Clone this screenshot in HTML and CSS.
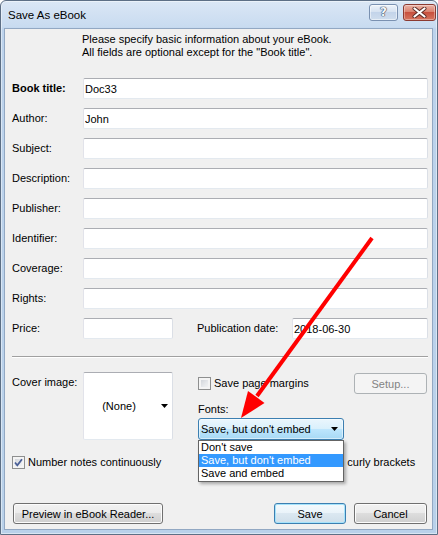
FILE: index.html
```html
<!DOCTYPE html>
<html>
<head>
<meta charset="utf-8">
<title>Save As eBook</title>
<link rel="stylesheet" href="styles.css">
</head>
<body>
<div class="window">
  <div class="titlebar">
    <span class="title">Save As eBook</span>
    <div class="caption">
      <span class="cap-btn help">?</span>
      <span class="cap-btn close">
        <svg width="15" height="11" viewBox="0 0 15 11"><path d="M2.5 1.5 L12.5 9.5 M12.5 1.5 L2.5 9.5" stroke="#5b2a24" stroke-width="4" stroke-linecap="round"/><path d="M2.5 1.5 L12.5 9.5 M12.5 1.5 L2.5 9.5" stroke="#ffffff" stroke-width="2.2" stroke-linecap="round"/></svg>
      </span>
    </div>
  </div>
  <div class="client">
    <div class="intro">
      <div>Please specify basic information about your eBook.</div>
      <div>All fields are optional except for the "Book title".</div>
    </div>
    <div class="fields">
      <label class="lbl bold">Book title:</label><input class="tb" value="Doc33">
      <label class="lbl">Author:</label><input class="tb" value="John">
      <label class="lbl">Subject:</label><input class="tb" value="">
      <label class="lbl">Description:</label><input class="tb" value="">
      <label class="lbl">Publisher:</label><input class="tb" value="">
      <label class="lbl">Identifier:</label><input class="tb" value="">
      <label class="lbl">Coverage:</label><input class="tb" value="">
      <label class="lbl">Rights:</label><input class="tb" value="">
      <label class="lbl">Price:</label>
      <div class="price-row">
        <input class="tb price" value="">
        <label class="lbl date-lbl">Publication date:</label>
        <input class="tb date" value="2018-06-30">
      </div>
    </div>
    <div class="sep"></div>
    <div class="cover-section">
      <div class="cover-left">
        <span class="cover-lbl">Cover image:</span>
        <div class="cover-box">
          <span class="none">(None)</span>
          <svg class="tri" width="7" height="4" viewBox="0 0 7 4"><polygon points="0,0 7,0 3.5,4" fill="#000"/></svg>
        </div>
      </div>
      <div class="cover-right">
        <div class="margins-row">
          <span class="chk-line"><span class="chk"></span>Save page margins</span>
          <span class="btn disabled setup">Setup...</span>
        </div>
        <div class="fonts-lbl">Fonts:</div>
        <div class="combo-wrap">
          <div class="combo">
            <span>Save, but don't embed</span>
            <svg class="tri" width="7" height="4" viewBox="0 0 7 4"><polygon points="0,0 7,0 3.5,4" fill="#000"/></svg>
          </div>
          <ul class="droplist">
            <li>Don't save</li>
            <li class="sel">Save, but don't embed</li>
            <li>Save and embed</li>
          </ul>
        </div>
      </div>
    </div>
    <div class="notes-row">
      <div class="notes-left">
        <span class="chk-line"><span class="chk checked"><svg width="11" height="11" viewBox="0 0 11 11"><path d="M2 5.5 L4.3 8.3 L9 2.2" fill="none" stroke="#4a5f97" stroke-width="1.8"/></svg></span>Number notes continuously</span>
      </div>
      <div class="notes-right">
        <span class="chk-line"><span class="chk"></span>Enclose note references in curly brackets</span>
      </div>
    </div>
    <div class="buttons">
      <span class="btn preview">Preview in eBook Reader...</span>
      <span class="btn default save">Save</span>
      <span class="btn cancel">Cancel</span>
    </div>
  </div>
  <svg class="arrow" width="438" height="535" viewBox="0 0 438 535">
    <line x1="372" y1="238" x2="257" y2="396" stroke="#ff0000" stroke-width="4"/>
    <polygon points="241,418 264.5,403 248,391" fill="#ff0000"/>
  </svg>
</div>
</body>
</html>
```

FILE: styles.css
```css
* { box-sizing: border-box; }
html, body { margin: 0; padding: 0; }
body {
  font-family: "Liberation Sans", Arial, sans-serif;
  font-size: 11px;
  color: #000;
  background: #ffffff;
}
.window {
  position: relative;
  width: 438px;
  height: 535px;
  border: 1px solid #5d6f85;
  border-radius: 6px 6px 0 0;
  padding: 0 4px 4px 3px;
  background: linear-gradient(to bottom, #dbe7f5 0, #c8dbf0 26px, #bdd3ec 28px, #b9d1ea 100%);
  box-shadow: inset 0 0 0 1px rgba(255,255,255,0.45);
  display: flex;
  flex-direction: column;
}
.titlebar {
  height: 27px;
  flex: none;
  display: flex;
  align-items: flex-start;
}
.title {
  padding-left: 4px;
  margin-top: 7px;
  font-size: 11.5px;
  line-height: 14px;
  color: #000;
}
.caption {
  margin-left: auto;
  margin-right: -3px;
  margin-top: 3px;
  display: flex;
  gap: 5px;
}
.cap-btn {
  height: 17px;
  border-radius: 3px;
  display: flex;
  align-items: center;
  justify-content: center;
}
.help {
  width: 29px;
  border: 1px solid #7a91b1;
  background: linear-gradient(#eef3fa 0, #d6e2f1 45%, #c3d4ea 50%, #cfdded 100%);
  box-shadow: inset 0 0 0 1px rgba(255,255,255,0.5);
  font-family: "DejaVu Sans", sans-serif;
  font-weight: bold;
  font-size: 12px;
  line-height: 15px;
  color: #f6f8fb;
  text-shadow: 0 0 1px #2d3e58, 0 0 1px #2d3e58, 0 0 1px #2d3e58;
}
.close {
  width: 33px;
  border: 1px solid #8b3a31;
  background: linear-gradient(#ebb3a7 0, #da826f 45%, #c8503e 50%, #d6755f 100%);
  box-shadow: inset 0 0 0 1px rgba(255,255,255,0.35);
}
.client {
  width: 429px;
  height: 502px;
  flex: none;
  background: #f0f0f0;
  border: 1px solid #92a8c3;
  padding: 4px 4px 0 7px;
}
.intro {
  margin-left: 70px;
  line-height: 13px;
}
.fields {
  margin-top: 19px;
  display: grid;
  grid-template-columns: 71px 345px;
  grid-auto-rows: 21px;
  row-gap: 9px;
  align-items: center;
}
.lbl { line-height: 13px; }
.bold { font-weight: bold; }
.tb {
  display: block;
  width: 100%;
  height: 21px;
  margin: 0;
  padding: 0 1px;
  font-family: "Liberation Sans", Arial, sans-serif;
  font-size: 11px;
  color: #000;
  background: #fff;
  border: 1px solid;
  border-color: #abadb3 #dbdfe6 #e3e9ef #e2e3ea;
  border-radius: 2px;
  outline: none;
}
.price-row {
  display: flex;
  align-items: center;
  height: 21px;
}
.tb.price { width: 90px; flex: none; }
.date-lbl { width: 95px; margin-left: 24px; flex: none; }
.tb.date { width: 136px; flex: none; }
.sep {
  margin-top: 17px;
  height: 2px;
  border-top: 1px solid #a0a0a0;
  border-bottom: 1px solid #ffffff;
}
.cover-section {
  margin-top: 14px;
  display: flex;
}
.cover-left {
  width: 186px;
  flex: none;
  display: flex;
  align-items: flex-start;
}
.cover-lbl {
  width: 71px;
  line-height: 21px;
}
.cover-box {
  width: 90px;
  height: 68px;
  background: #fff;
  border: 1px solid;
  border-color: #abadb3 #dbdfe6 #e3e9ef #e2e3ea;
  border-radius: 2px;
  display: flex;
  align-items: center;
}
.none {
  width: 70px;
  text-align: center;
}
.cover-box .tri { margin-left: 7px; }
.cover-right {
  width: 230px;
  flex: none;
  margin-top: 1px;
}
.margins-row {
  height: 21px;
  display: flex;
  align-items: center;
  justify-content: space-between;
}
.chk-line {
  display: flex;
  align-items: center;
  gap: 3px;
  line-height: 13px;
  white-space: nowrap;
}
.chk {
  width: 13px;
  height: 13px;
  flex: none;
  border: 1px solid #8e8f8f;
  background: linear-gradient(135deg, #c9cdd3 0%, #e6e8eb 55%, #f8f8f8 100%);
  box-shadow: inset 0 0 0 2px #f4f4f4;
  display: flex;
  align-items: center;
  justify-content: center;
}
.chk.checked svg { display: block; }
.btn {
  display: flex;
  align-items: center;
  justify-content: center;
  height: 21px;
  border: 1px solid #707070;
  border-radius: 3px;
  background: linear-gradient(#f2f2f2 0%, #ebebeb 50%, #dddddd 50%, #cfcfcf 100%);
  box-shadow: inset 0 0 0 1px #fcfcfc;
  white-space: nowrap;
}
.btn.disabled {
  border-color: #adb2b5;
  background: #f4f4f4;
  box-shadow: none;
  color: #838383;
}
.setup { width: 73px; margin-right: 1px; }
.fonts-lbl {
  margin-top: 9px;
  line-height: 13px;
}
.combo-wrap {
  position: relative;
  margin-top: 2px;
  width: 146px;
}
.combo {
  height: 22px;
  border: 1px solid #3c7fb1;
  border-radius: 3px;
  background: linear-gradient(#eaf6fd 0%, #d9f0fc 50%, #bee6fd 50%, #a7d9f5 100%);
  box-shadow: inset 0 0 0 1px rgba(255,255,255,0.5);
  display: flex;
  align-items: center;
  justify-content: space-between;
  padding: 0 5px 0 2px;
}
.tri { display: block; flex: none; }
.droplist {
  position: absolute;
  left: 0;
  top: 22px;
  width: 146px;
  margin: 0;
  padding: 0 0 1px 0;
  list-style: none;
  background: #fff;
  border: 1px solid #646464;
  box-shadow: 2px 2px 3px rgba(0,0,0,0.3);
  z-index: 5;
}
.droplist li {
  height: 13px;
  line-height: 13px;
  padding-left: 2px;
  white-space: nowrap;
}
.droplist li.sel {
  background: #3399ff;
  color: #fff;
}
.notes-row {
  margin-top: 16px;
  height: 13px;
  display: flex;
}
.notes-left { width: 186px; flex: none; }
.buttons {
  margin-top: 34px;
  display: flex;
}
.preview { width: 150px; margin-left: 1px; }
.save { width: 72px; margin-left: auto; }
.cancel { width: 73px; margin-left: 8px; margin-right: 1px; }
.btn.default {
  border-color: #3c7fb1;
  box-shadow: inset 0 0 0 1px #a6e3fb;
  background: linear-gradient(#f4fafd 0%, #e9f3f9 50%, #dbe8f1 50%, #cfdfea 100%);
}
.arrow {
  position: absolute;
  left: -1px;
  top: -1px;
  pointer-events: none;
  z-index: 10;
}
```
